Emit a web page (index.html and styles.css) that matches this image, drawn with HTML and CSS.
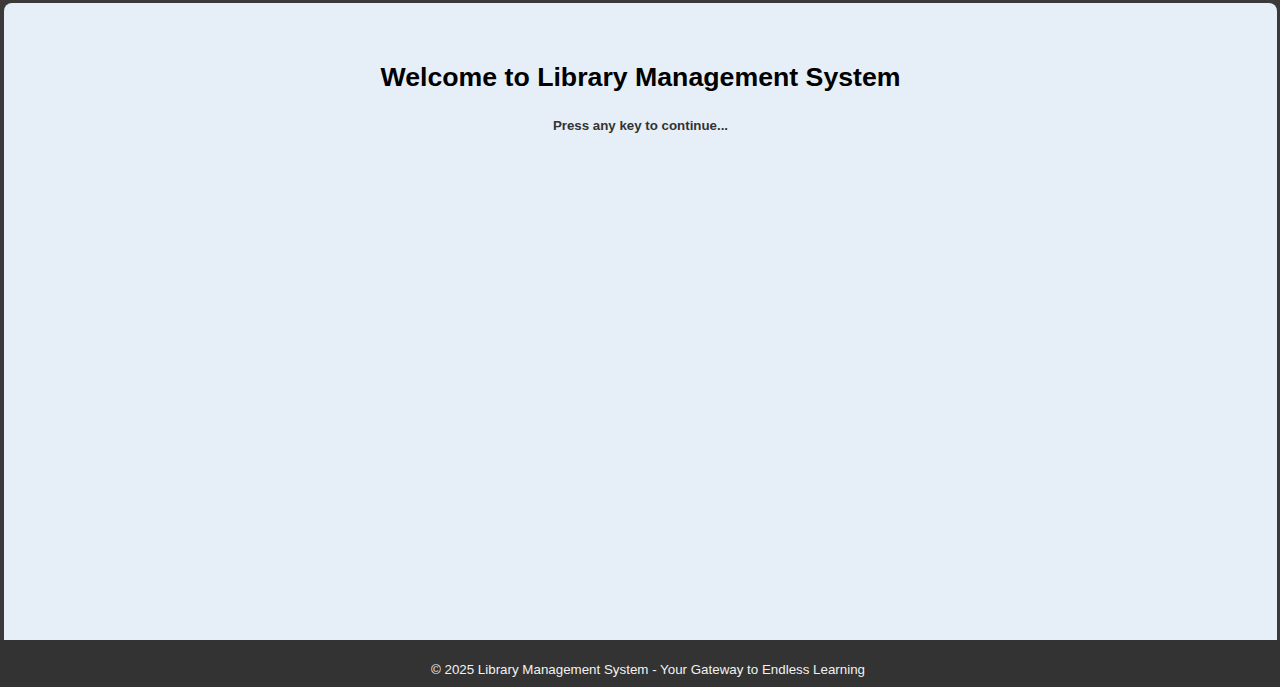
FILE: index.html
```html
<!DOCTYPE html>
<html lang="en">
<head>
<meta charset="utf-8">
<title>Library Management System</title>
<link rel="stylesheet" href="styles.css">
</head>
<body>
<div class="page">
  <main class="panel">
    <h1 class="title">Welcome to Library Management System</h1>
    <p class="hint">Press any key to continue...</p>
  </main>
  <footer class="footer">© 2025 Library Management System - Your Gateway to Endless Learning</footer>
</div>
</body>
</html>
```
FILE: styles.css
```css
html, body {
  margin: 0;
  padding: 0;
  height: 100%;
}
body {
  background: #333333;
  font-family: "Liberation Sans", Arial, sans-serif;
}
.page {
  height: 100vh;
  display: flex;
  flex-direction: column;
  box-sizing: border-box;
  padding: 3px 3px 0 4px;
  background: #3a3a3a;
}
.panel {
  flex: 1;
  background: #e6eff7;
  border-radius: 8px 8px 0 0;
  display: flex;
  flex-direction: column;
  align-items: center;
  padding-top: 57px;
}
.title {
  margin: 0;
  font-size: 26.7px;
  font-weight: bold;
  color: #000;
  line-height: 34px;
}
.hint {
  margin: 24px 0 0;
  font-size: 13.3px;
  font-weight: bold;
  color: #333;
  line-height: 16px;
}
.footer {
  height: 47px;
  margin: 0 -3px 0 -4px;
  background: #333333;
  color: #f2f2f2;
  font-size: 13.35px;
  display: flex;
  align-items: center;
  justify-content: center;
  padding: 11px 0 0 16px;
  box-sizing: border-box;
}
```
